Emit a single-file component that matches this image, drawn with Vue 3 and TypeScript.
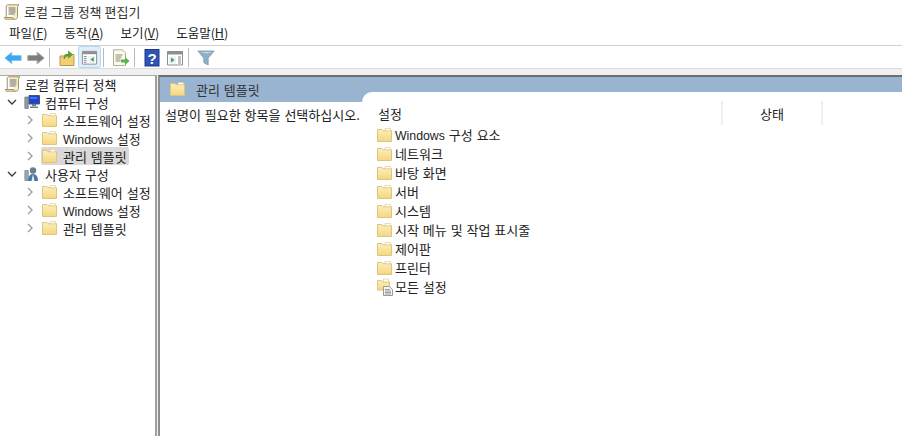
<script setup lang="ts">
const menus = [
  { text: '파일', key: 'F' },
  { text: '동작', key: 'A' },
  { text: '보기', key: 'V' },
  { text: '도움말', key: 'H' },
]
interface TreeRow { latin?: string; label: string; selected?: boolean }
const sections: { label: string; kind: string; rows: TreeRow[] }[] = [
  { label: '컴퓨터 구성', kind: 'pc', rows: [{ label: '소프트웨어 설정' }, { latin: 'Windows', label: ' 설정' }, { label: '관리 템플릿', selected: true }] },
  { label: '사용자 구성', kind: 'user', rows: [{ label: '소프트웨어 설정' }, { latin: 'Windows', label: ' 설정' }, { label: '관리 템플릿' }] },
]
const items: { latin?: string; label: string }[] = [
  { latin: 'Windows', label: ' 구성 요소' },
  { label: '네트워크' },
  { label: '바탕 화면' },
  { label: '서버' },
  { label: '시스템' },
  { label: '시작 메뉴 및 작업 표시줄' },
  { label: '제어판' },
  { label: '프린터' },
]
</script>

<template>
  <div class="window">
    <svg class="defs" aria-hidden="true">
      <defs>
        <linearGradient id="fg" x1="0" y1="0" x2="0" y2="1">
          <stop offset="0" stop-color="#fcefbd" />
          <stop offset="1" stop-color="#f5d67f" />
        </linearGradient>
        <symbol id="folder" viewBox="0 0 16 16">
          <path d="M.5 2.500h4.500l1 1.200h8.500v10.800H.5z" fill="url(#fg)" stroke="#dfc47c" />
          <path d="M8 1.500h5.500v2.200H8z" fill="#fff" stroke="#dfc47c" stroke-width=".6" />
        </symbol>
        <symbol id="scroll" viewBox="0 0 16 16">
          <path d="M3.500 .8h11.500c-1 .6-1.500 1.600-1.500 3v8.500c0 1.500-.8 2.900-2.200 2.900H1.800C.9 15.200.3 14.500.3 13.500h8.400c0 1 .6 1.700 1.300 1.700M3.500.8C2.500.8 2.200 1.800 2.200 3v10" fill="#f6edc7" stroke="#a3925f" />
          <path d="M4.500 4h7M4.500 6h7M4.500 8h7M4.500 10h6" stroke="#6f7070" />
        </symbol>
      </defs>
    </svg>
    <div class="titlebar">
      <svg class="ic16"><use href="#scroll" /></svg>
      <span>로컬 그룹 정책 편집기</span>
    </div>
    <div class="menubar">
      <span v-for="m in menus" :key="m.key" class="menu">{{ m.text }}(<u>{{ m.key }}</u>)</span>
    </div>
    <div class="toolbar">
      <span class="btn"><svg class="tool" viewBox="0 0 18 18"><path d="M.8 9l7-5.800v3.300h9.400v5H7.800v3.300z" fill="#3fa6ee" stroke="#86c8f3" /></svg></span>
      <span class="btn"><svg class="tool" viewBox="0 0 18 18"><path d="M17.200 9l-7-5.800v3.300H.8v5h9.400v3.300z" fill="#7d7d7d" stroke="#a8a8a8" /></svg></span>
      <i class="sep"></i>
      <span class="btn"><svg class="tool" viewBox="0 0 18 18"><path d="M2 7h4l1-1.500h9V16.500H2z" fill="#f2cf72" stroke="#b99a48" /><path d="M6 10c0-3.500 2-5 4.500-5V2l4 3.500-4 3.500V6.800C8.500 6.800 7 8 6 10z" fill="#56a53a" stroke="#3e8a28" stroke-width=".6" /></svg></span>
      <span class="btn active"><svg class="tool" viewBox="0 0 18 18"><path d="M1.500 2.500h15v13.500h-15z" fill="#fff" stroke="#8d8d8d" /><path d="M1.500 2.500h15v3h-15z" fill="#8f8f8f" /><path d="M3 8h3M3 10h3M3 12h3M3 14h3" stroke="#7c8b98" /><path d="M8 7.500h7v7H8z" fill="#e9f1f4" /><path d="M13.500 8.500v5L10 11z" fill="#3aa34a" /></svg></span>
      <i class="sep"></i>
      <span class="btn"><svg class="tool" viewBox="0 0 18 18"><path d="M1.500 .8h9l3 3v12.800h-12z" fill="#fbf8ec" stroke="#b2ab97" /><path d="M3.500 6h7M3.500 8h6M3.500 10h5M3.500 12h5" stroke="#8a8a7a" /><path d="M9 10.500h4V8l4.500 4-4.500 4v-2.500H9z" fill="#53b54b" /></svg></span>
      <i class="sep"></i>
      <span class="btn"><svg class="tool" viewBox="0 0 18 18"><rect x="2" y=".5" width="14" height="16.500" fill="#2e55b4" stroke="#1c3a8c" /><text x="9" y="14.500" text-anchor="middle" class="qmark">?</text></svg></span>
      <span class="btn"><svg class="tool" viewBox="0 0 18 18"><path d="M1.500 2.500h15v13.500h-15z" fill="#fff" stroke="#8d8d8d" /><path d="M1.500 2.500h15v3h-15z" fill="#8f8f8f" /><path d="M3 7.500h7v7H3z" fill="#e9f1f4" /><path d="M5 8.500v5L8.500 11z" fill="#3aa34a" /><path d="M12 8h3M12 10h3M12 12h3M12 14h3" stroke="#7c8b98" /></svg></span>
      <i class="sep"></i>
      <span class="btn"><svg class="tool" viewBox="0 0 18 18"><path d="M.8 2h16.400l-6 7v7l-4.400-2.200V9z" fill="#8fb0c6" stroke="#7d9aae" stroke-width=".8" /><path d="M3 3h12l-5 1.200z" fill="#d7e6ef" /></svg></span>
    </div>
    <div class="strip"></div>
    <div class="main">
      <aside class="tree">
        <div class="row root">
          <svg class="ic16"><use href="#scroll" /></svg>
          <span>로컬 컴퓨터 정책</span>
        </div>
        <template v-for="s in sections" :key="s.label">
          <div class="row sec">
            <svg class="chev" viewBox="0 0 10 10"><path d="M1 3l4 4 4-4" fill="none" stroke="#3c3c3c" stroke-width="1.400" /></svg>
            <svg v-if="s.kind === 'pc'" class="ic16 sec-ic" viewBox="0 0 16 16"><path d="M.8 3h3.500v11.500H.8z" fill="#8d9bab" stroke="#5e6b78" stroke-width=".6" /><path d="M5 1.500h10.500V10H5z" fill="#1f45d0" stroke="#47566c" /><path d="M6 3h7v2H6z" fill="#3b7be8" /><path d="M8 10h4v2H8zM6 12.500h8V14H6z" fill="#6f7c8c" /></svg>
            <svg v-else class="ic16 sec-ic" viewBox="0 0 16 16"><path d="M.8 4.500h3.500v10H.8z" fill="#9aa7b4" stroke="#6a7683" stroke-width=".6" /><circle cx="9" cy="4.500" r="3.200" fill="#6c7f92" /><path d="M4 15c0-4.500 2-7 5-7s5 2.500 5 7z" fill="#4b77a8" /><path d="M9 8l-1.500 7h3z" fill="#e8edf1" /></svg>
            <span>{{ s.label }}</span>
          </div>
          <div v-for="r in s.rows" :key="r.label + s.label" class="row child">
            <svg class="chev" viewBox="0 0 10 10"><path d="M3 1l4 4-4 4" fill="none" stroke="#a0a0a0" stroke-width="1.400" /></svg>
            <div class="node" :class="{ selected: r.selected }">
              <svg class="ic16"><use href="#folder" /></svg>
              <span><span v-if="r.latin" class="latin">{{ r.latin }}</span>{{ r.label }}</span>
            </div>
          </div>
        </template>
      </aside>
      <section class="pane">
        <div class="pane-head">
          <svg class="ic16"><use href="#folder" /></svg>
          <span>관리 템플릿</span>
        </div>
        <div class="pane-body">
          <div class="desc">설명이 필요한 항목을 선택하십시오.</div>
          <div class="list">
            <div class="cols">
              <div class="col col-name">설정</div>
              <div class="col col-state">상태</div>
            </div>
            <div v-for="it in items" :key="it.label" class="item">
              <svg class="ic16"><use href="#folder" /></svg>
              <span><span v-if="it.latin" class="latin">{{ it.latin }}</span>{{ it.label }}</span>
            </div>
            <div class="item">
              <svg class="ic16 all-ic" viewBox="0 0 16 18"><path d="M.5 2.500h4l1 1.500h7v8H.5z" fill="url(#fg)" stroke="#dfc47c" /><path d="M6.500 1h5v3h-5z" fill="#fff" stroke="#dfc47c" stroke-width=".6" /><path d="M6.500 8.500h6l3 3v6h-9z" fill="#f4f4f4" stroke="#9a9a9a" /><path d="M8 11.500h5M8 13h6M8 14.500h6M8 16h6" stroke="#8a8a8a" stroke-width=".8" /></svg>
              <span>모든 설정</span>
            </div>
          </div>
        </div>
      </section>
    </div>
  </div>
</template>

<style scoped>
.window { width: 902px; height: 436px; overflow: hidden; display: flex; flex-direction: column; background: #fff; font-family: "Noto Sans CJK KR", "Noto Sans", sans-serif; font-size: 13px; color: #222; word-spacing: 1px; }
.defs { position: absolute; width: 0; height: 0; }
.latin { font-family: "Liberation Sans", sans-serif; font-size: 12.300px; }
.titlebar { height: 23px; box-sizing: border-box; display: flex; align-items: center; padding: 0 0 1px 4px; gap: 4px; flex: none; color: #333; word-spacing: 0; }
.titlebar .ic16 { margin-top: 2px; }
.menubar { height: 23px; box-sizing: border-box; display: flex; align-items: center; padding: 0 0 3px 9px; gap: 17px; border-bottom: 1px solid #d0d0d0; flex: none; font-size: 12.500px; word-spacing: 0; }
.menu u { text-underline-offset: 1px; }
.toolbar { height: 22px; display: flex; padding-left: 1px; flex: none; }
.btn { width: 23px; height: 22px; box-sizing: border-box; display: flex; align-items: center; justify-content: center; padding-top: 1px; flex: none; }
.btn.active { background: #e0eefb; border: 1px solid #b5d8f5; border-radius: 2px; }
.tool { width: 18px; height: 18px; flex: none; }
.btn.active .tool { width: 17px; height: 17px; }
.sep { width: 8px; height: 19px; margin-top: 2px; flex: none; background: linear-gradient(#b8b8b8, #b8b8b8) 2px 0 / 1px 100% no-repeat; }
.qmark { font-family: "Liberation Sans", sans-serif; font-weight: 700; font-size: 15px; fill: #fff; }
.strip { height: 7px; box-sizing: border-box; background: #f0f0f0; border-top: 1px solid #dcdcdc; flex: none; }
.main { flex: 1; min-height: 0; display: flex; background: #f0f0f0; gap: 1px; }
.tree { width: 157px; flex: none; background: #fff; border-right: 2px solid #a0a0a0; border-top: 1px solid #a9a9a9; box-sizing: border-box; overflow: hidden; }
.row { height: 18px; display: flex; align-items: center; white-space: nowrap; }
.root { padding-left: 5px; gap: 4px; margin-top: -1px; }
.sec { padding-left: 7px; gap: 5px; }
.sec-ic { margin-left: 2px; }
.chev { width: 10px; height: 10px; flex: none; }
.child { padding-left: 25px; }
.node { display: flex; align-items: center; gap: 5px; margin-left: 6px; padding: 0 2px 0 1px; height: 18px; }
.node.selected { background: #d9d9d9; border-radius: 2px; }
.ic16 { width: 16px; height: 16px; flex: none; }
.pane { flex: 1; min-width: 0; background: #fff; border-left: 2px solid #8f8f8f; border-top: 2px solid #6d6d6d; display: flex; flex-direction: column; }
.pane-head { height: 25px; box-sizing: border-box; padding: 0 0 1px 10px; background: #99b4d1; display: flex; align-items: center; gap: 10px; flex: none; color: #333; }
.pane-body { flex: 1; display: flex; min-height: 0; }
.desc { width: 202px; flex: none; padding: 3px 0 0 5px; box-sizing: border-box; white-space: nowrap; }
.list { flex: 1; margin-top: -10px; background: #fff; border-top-left-radius: 10px; padding-left: 15px; }
.cols { display: flex; height: 24px; padding-top: 9px; }
.col { height: 24px; display: flex; align-items: center; box-sizing: border-box; }
.col-name { width: 346px; padding-left: 1px; border-right: 2px solid #f0f0f0; }
.col-state { width: 100px; justify-content: center; border-right: 2px solid #f0f0f0; }
.item { height: 19px; display: flex; align-items: center; gap: 2px; white-space: nowrap; }
.all-ic { height: 18px; overflow: visible; }
</style>
